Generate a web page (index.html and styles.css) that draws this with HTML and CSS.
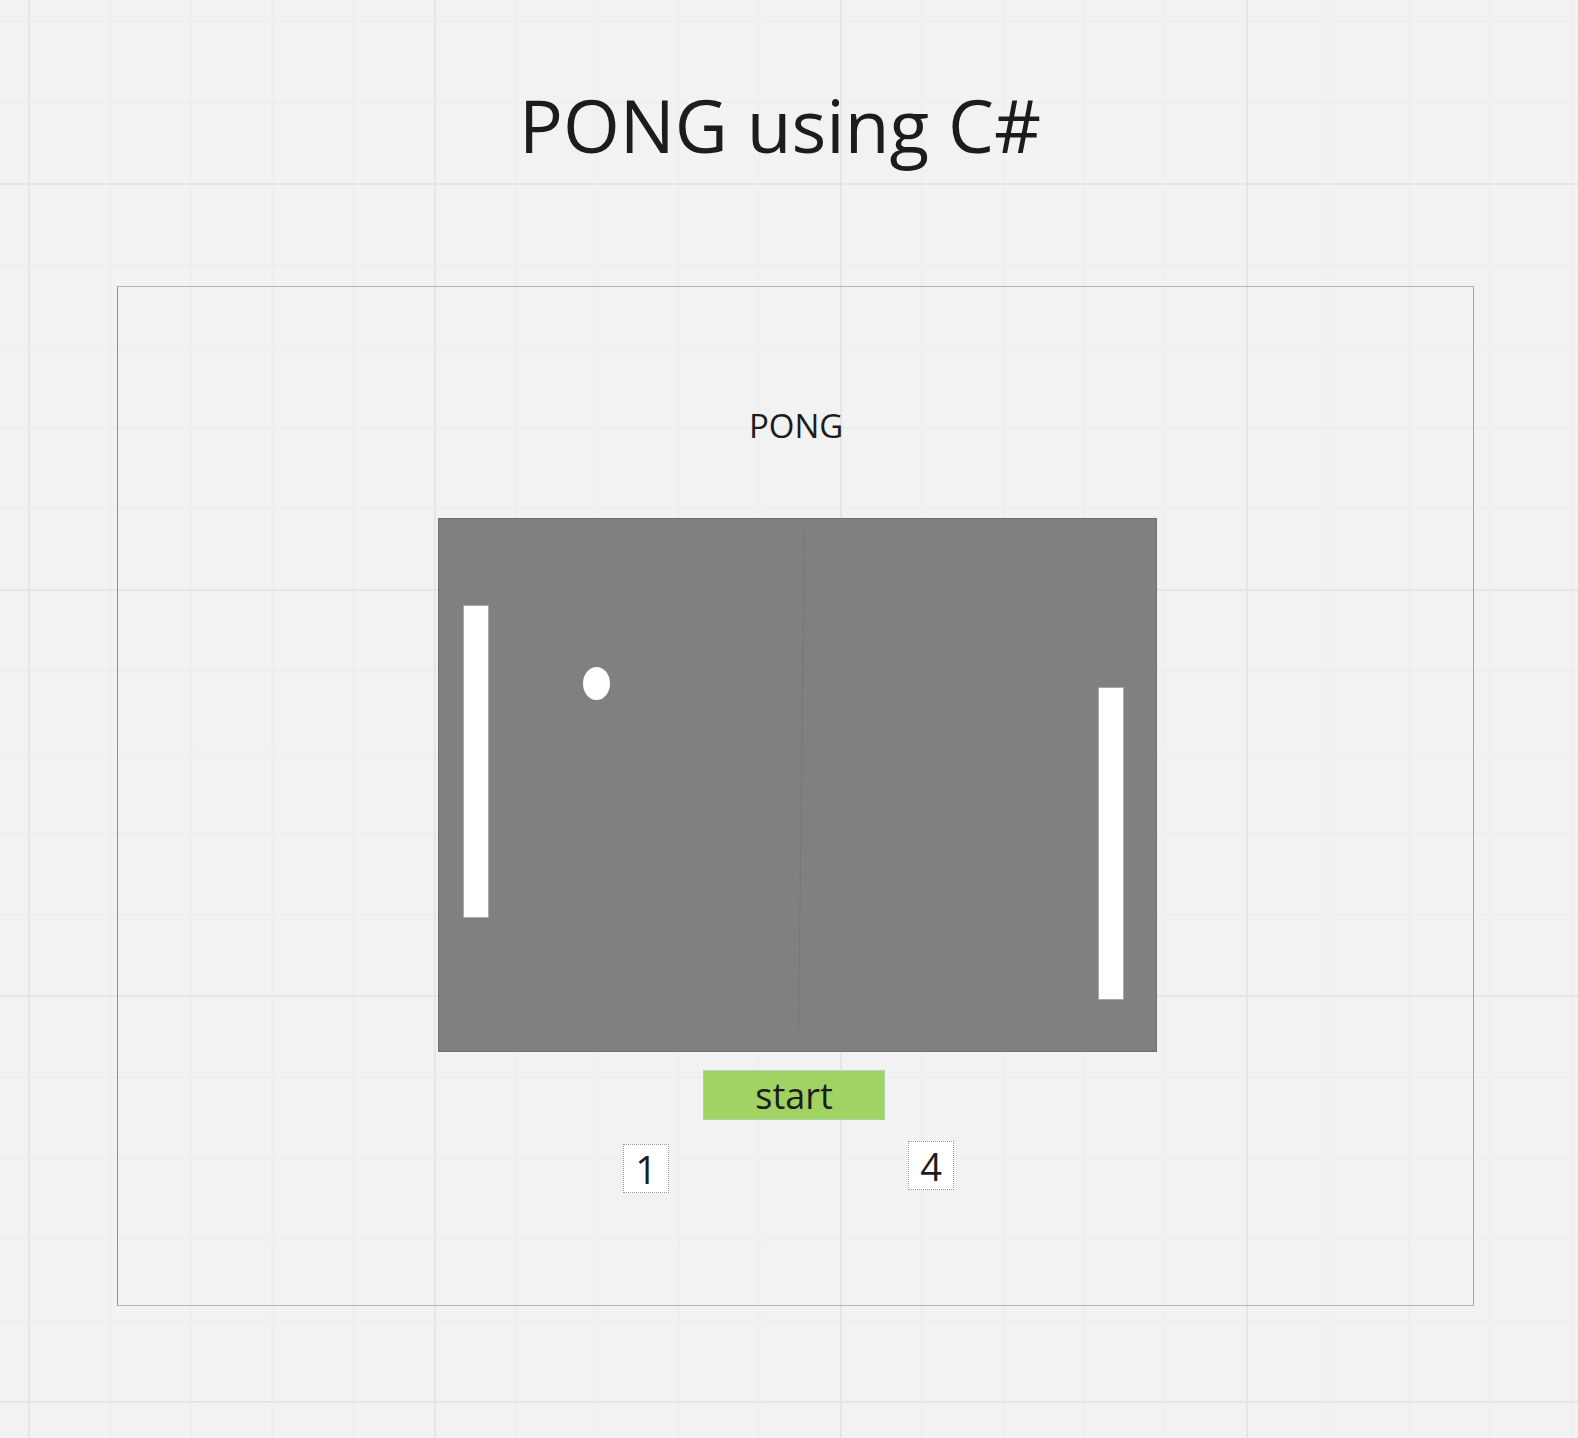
FILE: index.html
```html
<!DOCTYPE html>
<html lang="en">
<head>
<meta charset="utf-8">
<title>PONG using C#</title>
<link rel="stylesheet" href="styles.css">
</head>
<body>
  <h1 class="title">PONG using C#</h1>
  <div class="frame">
    <div class="label">PONG</div>
    <div class="game">
      <svg class="net" width="717" height="532" viewBox="0 0 717 532">
        <line x1="365.5" y1="10" x2="359.5" y2="514" stroke="#6a6a6a" stroke-width="1" stroke-dasharray="1.5 2"/>
      </svg>
      <div class="paddle paddle-left"></div>
      <div class="paddle paddle-right"></div>
      <div class="ball"></div>
    </div>
    <div class="start">start</div>
    <div class="scores">
      <div class="score score-left">1</div>
      <div class="score score-right">4</div>
    </div>
  </div>
</body>
</html>
```
FILE: styles.css
```css
html {
  background-color: #f2f2f2;
  background-image:
    linear-gradient(to right, #e5e5e5 2px, transparent 2px),
    linear-gradient(to bottom, #e5e5e5 2px, transparent 2px),
    linear-gradient(to right, #eeeeee 2px, transparent 2px),
    linear-gradient(to bottom, #eeeeee 2px, transparent 2px);
  background-size: 406px 100%, 100% 406px, 81.2px 100%, 100% 81.2px;
  background-position: 28px 0, 0 183px, 28px 0, 0 20.6px;
  min-height: 100%;
}

body {
  margin: 0;
  font-family: "Open Sans", "Noto Sans", sans-serif;
  color: #1c1c1c;
}

.title {
  margin: 75px 0 0 0;
  padding-left: 519px;
  font-size: 73px;
  line-height: 100px;
  font-weight: 400;
  height: 100px;
}

.frame {
  box-sizing: border-box;
  margin: 111px 0 0 117px;
  width: 1357px;
  height: 1020px;
  border-top: 1px solid #b3b3b3;
  border-bottom: 1px solid #b3b3b3;
  border-left: 1px solid #8f8f8f;
  border-right: 1px solid #a6a6a6;
  display: flex;
  flex-direction: column;
  align-items: flex-start;
}

.label {
  margin: 116px 0 0 631px;
  font-size: 33px;
  line-height: 45px;
  height: 45px;
}

.game {
  position: relative;
  box-sizing: border-box;
  margin: 70px 0 0 320px;
  width: 719px;
  height: 534px;
  background: #808080;
  border: 1px solid #6f6f6f;
}

.net {
  position: absolute;
  left: 0;
  top: 0;
}

.paddle {
  position: absolute;
  box-sizing: border-box;
  width: 26px;
  height: 313px;
  background: #ffffff;
  border: 1px solid #a8a8a8;
}

.paddle-left {
  left: 24px;
  top: 86px;
}

.paddle-right {
  left: 659px;
  top: 168px;
}

.ball {
  position: absolute;
  left: 144px;
  top: 148px;
  width: 27px;
  height: 33px;
  border-radius: 50%;
  background: #ffffff;
}

.start {
  box-sizing: border-box;
  margin: 18px 0 0 585px;
  width: 182px;
  height: 50px;
  padding-top: 2px;
  background: #a0d264;
  border: 1px solid #a3d3a6;
  border-top-color: #a7d8c4;
  font-size: 36px;
  line-height: 46px;
  text-align: center;
  color: #1c1c1c;
}

.scores {
  display: flex;
  align-items: flex-start;
  margin: 21px 0 0 505px;
  gap: 239px;
}

.score {
  box-sizing: border-box;
  width: 46px;
  height: 49px;
  background: #ffffff;
  border: 1px dotted #9a9a9a;
  font-size: 38px;
  line-height: 47px;
  text-align: center;
  padding-top: 1px;
}

.score-left {
  margin-top: 3px;
}
```
